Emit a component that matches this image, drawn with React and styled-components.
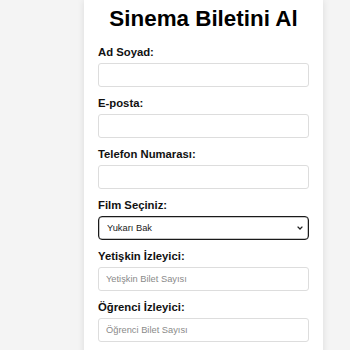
import React from "react";
import styled, { createGlobalStyle } from "styled-components";

const Global = createGlobalStyle`
  html, body { margin: 0; padding: 0; background: #f4f4f4; }
  body { font-family: "Liberation Sans", Arial, sans-serif; }
`;

const Page = styled.div`
  display: flex;
  padding-left: 84px;
`;

const Card = styled.form`
  width: 211px;
  padding: 6px 14px 14px;
  background: #ffffff;
  box-shadow: 0 0 7px rgba(0, 0, 0, 0.1);
  display: flex;
  flex-direction: column;
`;

const Title = styled.h1`
  margin: 0 0 14px;
  font-size: 22.4px;
  line-height: 26px;
  font-weight: bold;
  text-align: center;
  color: #000;
`;

const Field = styled.div`
  display: flex;
  flex-direction: column;
  gap: 4px;
  margin-bottom: 10px;
`;

const Label = styled.label`
  font-size: 11.3px;
  line-height: 13px;
  font-weight: bold;
  color: #111;
`;

const Input = styled.input`
  box-sizing: border-box;
  width: 100%;
  height: 24px;
  padding: 0 7px;
  border: 1px solid #dddddd;
  border-radius: 3px;
  font-family: "Liberation Sans", Arial, sans-serif;
  font-size: 9.3px;
  color: #333;
  outline: none;
  &::placeholder { color: #8a8a8a; }
`;

const chevron =
  "url(\"data:image/svg+xml;utf8,<svg xmlns='http://www.w3.org/2000/svg' width='6' height='4' viewBox='0 0 6 4'><path d='M0.6 0.6 L3 3 L5.4 0.6' fill='none' stroke='%23222' stroke-width='1.3'/></svg>\")";

const Select = styled.select`
  box-sizing: border-box;
  width: 100%;
  height: 24px;
  padding: 0 16px 0 8px;
  border: 1px solid #1a1a1a;
  border-radius: 4px;
  box-shadow: inset 0 0 0 0.5px rgba(0, 0, 0, 0.45);
  appearance: none;
  background: #fff ${chevron} no-repeat right 5px center / 6px 4px;
  font-family: "Liberation Sans", Arial, sans-serif;
  font-size: 9.3px;
  color: #222;
  outline: none;
`;

export default function App() {
  return (
    <>
      <Global />
      <Page>
        <Card>
          <Title>Sinema Biletini Al</Title>
          <Field>
            <Label>Ad Soyad:</Label>
            <Input type="text" />
          </Field>
          <Field>
            <Label>E-posta:</Label>
            <Input type="email" />
          </Field>
          <Field>
            <Label>Telefon Numarası:</Label>
            <Input type="tel" />
          </Field>
          <Field>
            <Label>Film Seçiniz:</Label>
            <Select defaultValue="yukari">
              <option value="yukari">Yukarı Bak</option>
            </Select>
          </Field>
          <Field>
            <Label>Yetişkin İzleyici:</Label>
            <Input type="number" placeholder="Yetişkin Bilet Sayısı" />
          </Field>
          <Field>
            <Label>Öğrenci İzleyici:</Label>
            <Input type="number" placeholder="Öğrenci Bilet Sayısı" />
          </Field>
        </Card>
      </Page>
    </>
  );
}
